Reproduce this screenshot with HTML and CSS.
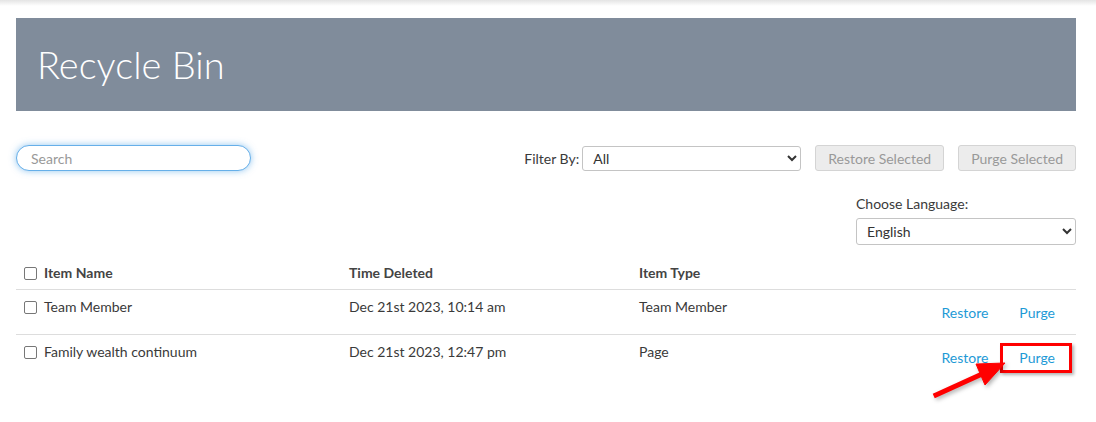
FILE: index.html
```html
<!DOCTYPE html>
<html lang="en">
<head>
  <meta charset="UTF-8" />
  <title>Recycle Bin</title>
  <link rel="stylesheet" href="styles.css">
</head>
<body>
  <div class="top-shade"></div>

  <div class="page">
    <!-- Encabezado -->
    <div class="banner">
      <h1 class="banner-title">Recycle Bin</h1>
    </div>

    <!-- Barra de herramientas -->
    <div class="toolbar">
      <input class="search" type="text" placeholder="Search" />
      <div class="toolbar-right">
        <label class="filter-label">Filter By:</label>
        <select class="filter-select">
          <option>All</option>
        </select>
        <button class="btn-bulk" disabled>Restore Selected</button>
        <button class="btn-bulk" disabled>Purge Selected</button>
      </div>
    </div>

    <div class="language">
      <label class="language-label">Choose Language:</label>
      <select class="language-select">
        <option>English</option>
      </select>
    </div>

    <!-- Tabla -->
    <table class="bin-table">
      <thead>
        <tr>
          <th class="col-name"><span class="check"></span>Item Name</th>
          <th class="col-time">Time Deleted</th>
          <th class="col-type">Item Type</th>
          <th class="col-actions"></th>
        </tr>
      </thead>
      <tbody>
        <tr>
          <td><span class="check"></span>Team Member</td>
          <td>Dec 21st 2023, 10:14 am</td>
          <td>Team Member</td>
          <td class="actions">
            <button class="link-btn link-restore">Restore</button><button class="link-btn">Purge</button>
          </td>
        </tr>
        <tr>
          <td><span class="check"></span>Family wealth continuum</td>
          <td>Dec 21st 2023, 12:47 pm</td>
          <td>Page</td>
          <td class="actions">
            <button class="link-btn link-restore">Restore</button><span class="marked"><button class="link-btn">Purge</button><span class="mark-box"></span></span>
          </td>
        </tr>
      </tbody>
    </table>
  </div>

  <!-- flecha de anotacion -->
  <svg class="arrow" width="1096" height="422" viewBox="0 0 1096 422">
    <g fill="#f00" stroke="#f00">
      <line x1="936" y1="395" x2="982" y2="374" stroke-width="5" stroke-linecap="square" />
      <polygon points="1005,363 976,364 985,385" stroke-width="1" stroke-linejoin="round" />
    </g>
  </svg>
</body>
</html>
```

FILE: styles.css
```css
* {
  box-sizing: border-box;
}

body {
  margin: 0;
  font-family: Lato, "Open Sans", sans-serif;
  font-size: 14px;
  color: #3a3a3a;
  background: #fff;
}

.top-shade {
  height: 6px;
  background: linear-gradient(#e4e4e4, #fff);
}

.page {
  padding: 12px 20px 0 16px;
}

.banner {
  background: #808c9b;
  height: 93px;
  padding: 21px 21px 0;
}

.banner-title {
  margin: 0;
  font-size: 38px;
  font-weight: 300;
  line-height: 50px;
  color: #fff;
}

.toolbar {
  display: flex;
  align-items: center;
  justify-content: space-between;
  margin-top: 34px;
}

.search {
  width: 235px;
  height: 26px;
  border: 1px solid #66afe9;
  border-radius: 13px;
  padding: 0 14px;
  font-family: inherit;
  font-size: 14px;
  outline: none;
  box-shadow: 0 0 7px rgba(102, 175, 233, 0.7);
}

.search::placeholder {
  color: #999;
}

.toolbar-right {
  display: flex;
  align-items: center;
}

.filter-label {
  margin-right: 3px;
}

.filter-select {
  width: 219px;
  height: 25px;
  margin-right: 14px;
}

.filter-select,
.language-select {
  border: 1px solid #c4c4c4;
  border-radius: 3px;
  background: #fff;
  font-family: inherit;
  font-size: 14px;
  color: #333;
  padding: 0 6px;
}

.btn-bulk {
  height: 26px;
  padding: 0 12px;
  border: 1px solid #d4d4d4;
  border-radius: 3px;
  background: #ececec;
  color: #999;
  font-family: inherit;
  font-size: 14px;
}

.btn-bulk + .btn-bulk {
  margin-left: 14px;
}

.language {
  display: flex;
  flex-direction: column;
  align-items: flex-start;
  width: 220px;
  margin: 24px 0 0 auto;
}

.language-label {
  line-height: 17px;
}

.language-select {
  width: 220px;
  height: 27px;
  margin-top: 6px;
}

.bin-table {
  width: 100%;
  border-collapse: collapse;
  margin-top: 10px;
}

.bin-table th {
  text-align: left;
  font-weight: 700;
  line-height: 17px;
  padding: 9px 8px 8px;
  border-bottom: 1px solid #ddd;
  color: #444;
}

.col-name {
  width: 325px;
}

.col-time {
  width: 290px;
}

.bin-table td {
  vertical-align: top;
  line-height: 17px;
  padding: 8px 8px 19px;
}

.bin-table tbody tr:first-child td {
  border-bottom: 1px solid #ddd;
}

.check {
  display: inline-block;
  width: 13px;
  height: 13px;
  border: 1px solid #777;
  border-radius: 2px;
  margin-right: 7px;
  vertical-align: -2px;
}

.actions {
  text-align: right;
  white-space: nowrap;
  padding-right: 7px !important;
  padding-bottom: 7px !important;
}

.link-btn {
  background: none;
  border: none;
  padding: 6px 14px;
  line-height: 17px;
  font-family: inherit;
  font-size: 14px;
  color: #1e9ad6;
  cursor: pointer;
}

.link-restore {
  padding-right: 17px;
}

.marked {
  position: relative;
  display: inline-block;
}

.mark-box {
  position: absolute;
  left: -5px;
  right: -3px;
  top: 0;
  bottom: -1px;
  border: 3px solid #f00;
  box-shadow: 2px 2px 3px rgba(0, 0, 0, 0.3);
}

.arrow {
  position: absolute;
  left: 0;
  top: 0;
  pointer-events: none;
  filter: drop-shadow(2px 2px 2px rgba(0, 0, 0, 0.3));
}
```
